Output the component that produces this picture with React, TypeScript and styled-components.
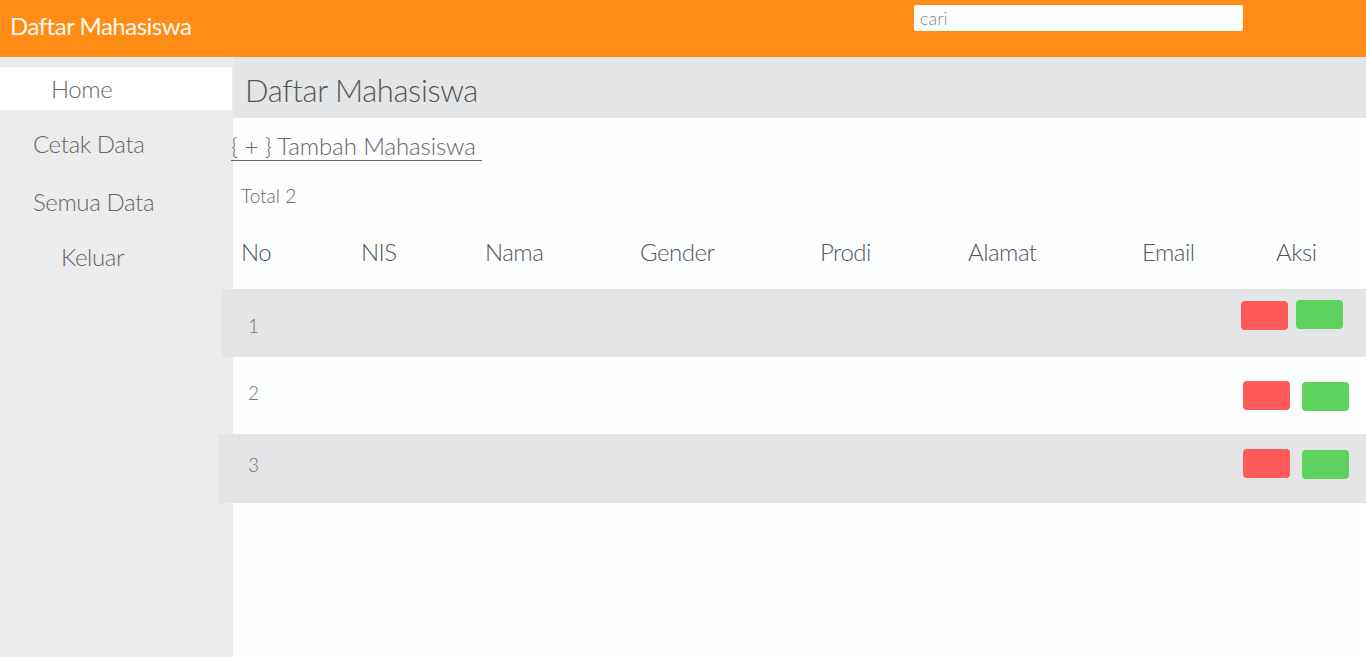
import React from "react";
import styled, { createGlobalStyle } from "styled-components";

const Global = createGlobalStyle`
  html, body { margin: 0; padding: 0; height: 100%; }
  body { font-family: Lato, "Open Sans", sans-serif; font-weight: 300; background: #fcfdfe; overflow: hidden; }
  #root { height: 100%; }
`;

const Page = styled.div`
  width: 1366px;
  height: 657px;
  display: flex;
  flex-direction: column;
`;

const Header = styled.header`
  height: 57px;
  flex: 0 0 57px;
  background: #ff8c16;
  display: flex;
  align-items: flex-start;
  box-sizing: border-box;
`;

const Brand = styled.h1`
  margin: 0;
  padding: 10px 0 0 10px;
  font-size: 24px;
  font-weight: 400;
  color: #fffaf2;
  letter-spacing: -0.5px;
  width: 904px;
  line-height: 32px;
`;

const Search = styled.input`
  margin-top: 5px;
  width: 329px;
  height: 26px;
  box-sizing: border-box;
  border: none;
  border-radius: 2px;
  background: #fcfdfe;
  padding: 0 6px;
  font-family: Lato, sans-serif;
  font-weight: 300;
  font-size: 18px;
  color: #888;
  outline: none;
  &::placeholder { color: #888; }
`;

const Body = styled.div`
  flex: 1;
  display: flex;
  min-height: 0;
`;

const Sidebar = styled.nav`
  width: 233px;
  flex: 0 0 233px;
  background: #ececec;
  padding-top: 10px;
  box-sizing: border-box;
  display: flex;
  flex-direction: column;
`;

const NavItem = styled.div<{ $active?: boolean; $indent: number; $h: number }>`
  height: ${(p) => p.$h}px;
  width: 232px;
  display: flex;
  align-items: center;
  padding-left: ${(p) => p.$indent}px;
  box-sizing: border-box;
  background: ${(p) => (p.$active ? "#ffffff" : "transparent")};
  font-size: 24px;
  color: #666;
  letter-spacing: -0.4px;
`;

const Main = styled.main`
  flex: 1;
  display: flex;
  flex-direction: column;
  background: #fcfdfe;
`;

const TitleBar = styled.div`
  height: 61px;
  background: #e4e5e6;
  display: flex;
  align-items: center;
  padding: 5px 0 0 12px;
  box-sizing: border-box;
`;

const Title = styled.h2`
  margin: 0;
  font-size: 31px;
  font-weight: 300;
  color: #555;
  letter-spacing: -0.4px;
`;

const AddLink = styled.a`
  margin: 13px 0 0 -2px;
  align-self: flex-start;
  font-size: 24px;
  color: #666;
  text-decoration: underline;
  text-underline-offset: 5px;
  text-decoration-thickness: 1px;
  line-height: 30px;
  letter-spacing: -0.1px;
  white-space: pre;
`;

const Total = styled.div`
  margin: 23px 0 0 8px;
  font-size: 19px;
  color: #666;
  line-height: 24px;
`;

const HeadRow = styled.div`
  margin-top: 20px;
  height: 61px;
  padding: 1px 0 0 8px;
  box-sizing: border-box;
  display: grid;
  grid-template-columns: 120px 124px 155px 180px 148px 174px 134px 1fr;
  align-items: start;
  line-height: 46px;
  font-size: 24px;
  color: #555;
  letter-spacing: -0.5px;
`;

const Row = styled.div<{ $bg: string; $h: number; $shift: number; $right: number; $gap: number; $btnTop: number }>`
  height: ${(p) => p.$h}px;
  margin-left: ${(p) => -p.$shift}px;
  background: ${(p) => p.$bg};
  display: flex;
  align-items: flex-start;
  justify-content: space-between;
  padding: ${(p) => p.$btnTop}px ${(p) => p.$right}px 0 ${(p) => 15 + p.$shift}px;
  box-sizing: border-box;
  --gap: ${(p) => p.$gap}px;
`;

const Num = styled.span<{ $top: number }>`
  margin-top: ${(p) => p.$top}px;
  font-size: 19px;
  color: #777;
`;

const Actions = styled.div`
  display: flex;
  gap: var(--gap);
`;

const Btn = styled.button<{ $color: string; $dy?: number }>`
  width: 47px;
  height: 29px;
  border: none;
  border-radius: 4px;
  background: ${(p) => p.$color};
  margin-top: ${(p) => p.$dy ?? 0}px;
  padding: 0;
`;

const rows = [
  { n: 1, bg: "#e4e5e6", h: 68, shift: 11, right: 23, gap: 8, btnTop: 11, numTop: 14, redDy: 1, greenDy: 0 },
  { n: 2, bg: "#fcfdfe", h: 77, shift: 0, right: 17, gap: 12, btnTop: 24, numTop: 0, redDy: 0, greenDy: 1 },
  { n: 3, bg: "#e4e5e6", h: 69, shift: 14, right: 17, gap: 12, btnTop: 15, numTop: 4, redDy: 0, greenDy: 1 },
];

const headers = ["No", "NIS", "Nama", "Gender", "Prodi", "Alamat", "Email", "Aksi"];

export default function App() {
  return (
    <Page>
      <Global />
      <Header>
        <Brand>Daftar Mahasiswa</Brand>
        <Search placeholder="cari" />
      </Header>
      <Body>
        <Sidebar>
          <NavItem $active $indent={51} $h={43}>Home</NavItem>
          <NavItem $indent={33} $h={66}>Cetak Data</NavItem>
          <NavItem $indent={33} $h={51}>Semua Data</NavItem>
          <NavItem $indent={61} $h={58}>Keluar</NavItem>
        </Sidebar>
        <Main>
          <TitleBar>
            <Title>Daftar Mahasiswa</Title>
          </TitleBar>
          <AddLink>{"{ + } Tambah Mahasiswa "}</AddLink>
          <Total>Total 2</Total>
          <HeadRow>
            {headers.map((h) => (
              <span key={h}>{h}</span>
            ))}
          </HeadRow>
          {rows.map((r) => (
            <Row key={r.n} $bg={r.bg} $h={r.h} $shift={r.shift} $right={r.right} $gap={r.gap} $btnTop={r.btnTop}>
              <Num $top={r.numTop}>{r.n}</Num>
              <Actions>
                <Btn $color="#ff5a5a" $dy={r.redDy} />
                <Btn $color="#5dd35d" $dy={r.greenDy} />
              </Actions>
            </Row>
          ))}
        </Main>
      </Body>
    </Page>
  );
}
